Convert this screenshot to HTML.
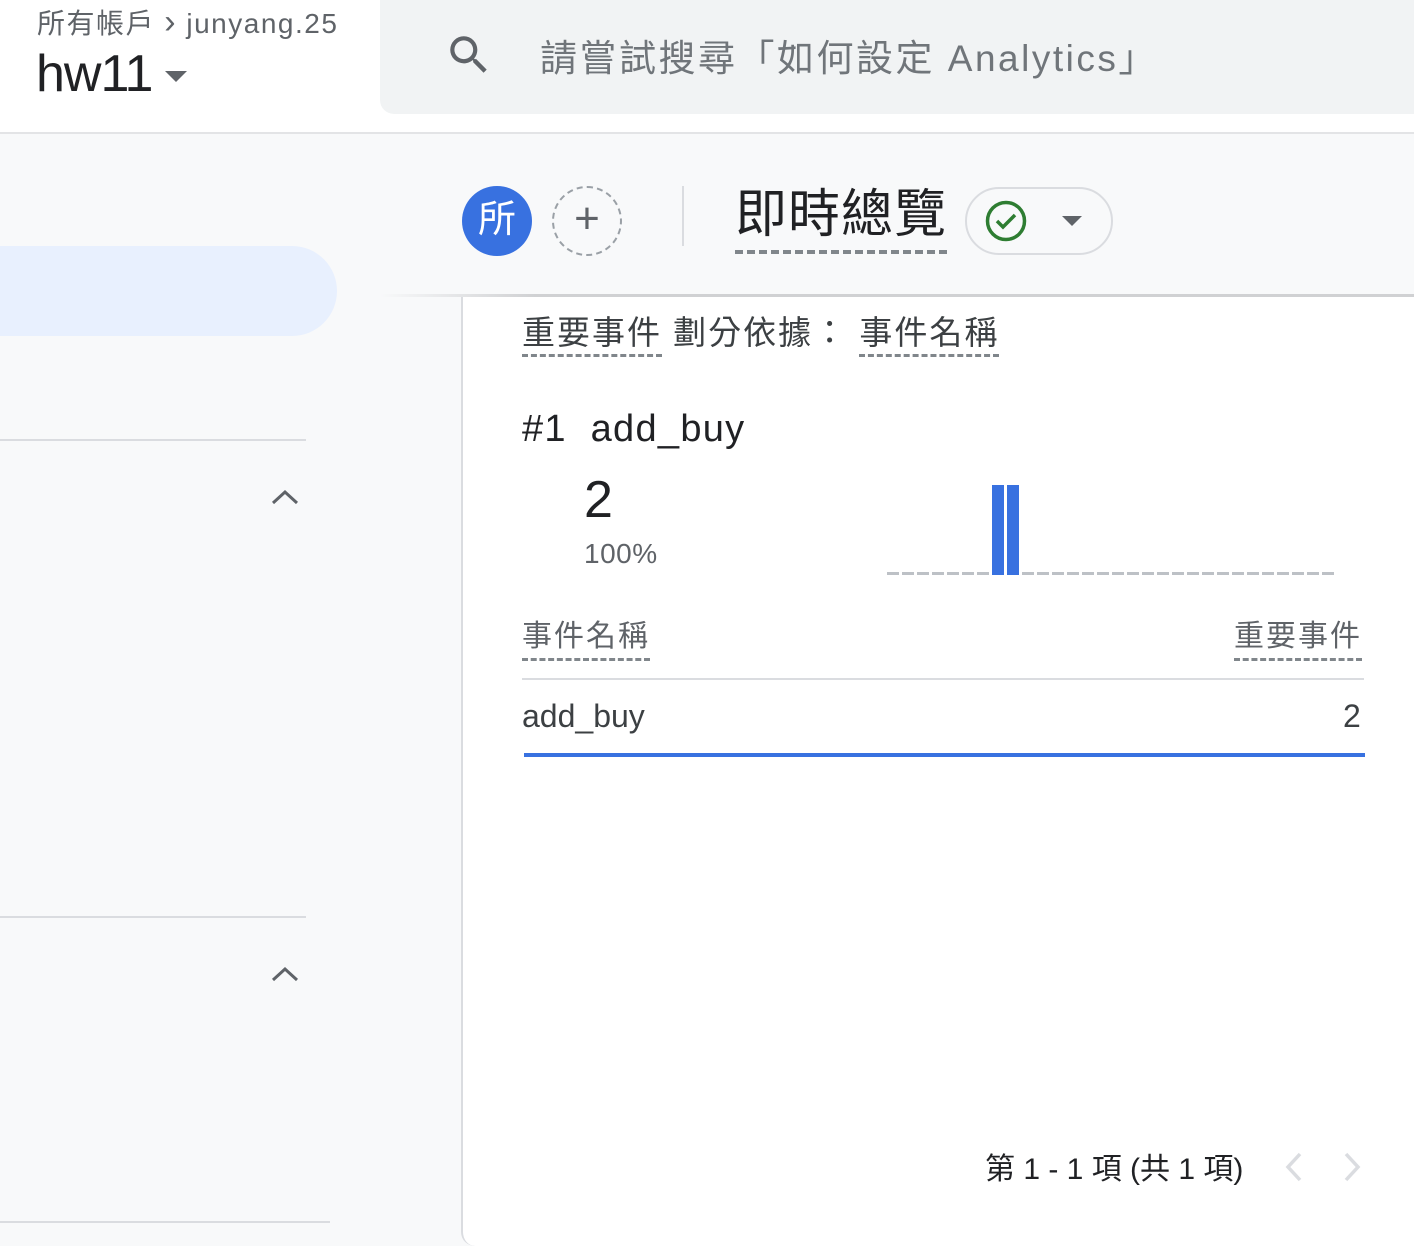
<!DOCTYPE html>
<html><head><meta charset="utf-8"><style>
*{margin:0;padding:0;box-sizing:border-box}
body{width:1414px;height:1246px;overflow:hidden;background:#f8f9fa;position:relative;font-family:"Liberation Sans","Noto Sans CJK TC",sans-serif;color:#202124}
.a{position:absolute;white-space:nowrap}
.dl{border-bottom:3px dashed #80868b;}
</style></head><body>
<div class="a" style="left:0;top:0;width:1414px;height:134px;background:#fff;border-bottom:2px solid #e3e4e6"></div>
<div class="a" style="left:37px;top:2px;font-size:28px;color:#5f6368;letter-spacing:1.5px">所有帳戶 <span style="font-size:34px;line-height:28px">&#x203A;</span> junyang.25</div>
<div class="a" style="left:36px;top:44px;font-size:52px;color:#202124;letter-spacing:-1px">hw11</div>
<svg class="a" style="left:163px;top:68px" width="26" height="16"><path d="M2 3h22l-11 11z" fill="#5f6368"/></svg>
<div class="a" style="left:380px;top:0;width:1040px;height:114px;background:#f1f3f4;border-radius:0 0 0 14px"></div>
<svg class="a" style="left:444px;top:30px" width="50" height="50" viewBox="0 0 24 24"><path d="M15.5 14h-.79l-.28-.27A6.47 6.47 0 0016 9.5 6.5 6.5 0 109.5 16c1.61 0 3.09-.59 4.23-1.57l.27.28v.79l5 4.99L20.49 19l-4.99-5zm-6 0C7.01 14 5 11.99 5 9.5S7.01 5 9.5 5 14 7.01 14 9.5 11.99 14 9.5 14z" fill="#5f6368"/></svg>
<div class="a" style="left:540px;top:28px;font-size:37px;color:#70757a;letter-spacing:2.5px">請嘗試搜尋「如何設定 Analytics」</div>

<div class="a" style="left:0;top:246px;width:337px;height:90px;background:#e8f0fe;border-radius:0 45px 45px 0"></div>
<div class="a" style="left:0;top:439px;width:306px;height:2px;background:#dadce0"></div>
<div class="a" style="left:0;top:916px;width:306px;height:2px;background:#dadce0"></div>
<div class="a" style="left:0;top:1221px;width:330px;height:2px;background:#dadce0"></div>
<svg class="a" style="left:270px;top:486px" width="30" height="20"><path d="M3 17l12-11 12 11" stroke="#5f6368" stroke-width="3" fill="none"/></svg>
<svg class="a" style="left:270px;top:963px" width="30" height="20"><path d="M3 17l12-11 12 11" stroke="#5f6368" stroke-width="3" fill="none"/></svg>

<div class="a" style="left:380px;top:294px;width:1034px;height:3px;background:linear-gradient(to right,rgba(0,0,0,0),#d0d1d3 15%)"></div>
<div class="a" style="left:461px;top:297px;width:960px;height:949px;background:#fff;border-left:2px solid #dadce0;border-radius:0 0 0 14px"></div>

<div class="a" style="left:462px;top:186px;width:70px;height:70px;border-radius:50%;background:#3871e0;color:#fff;font-size:38px;text-align:center;line-height:68px">所</div>
<div class="a" style="left:552px;top:186px;width:70px;height:70px;border-radius:50%;border:2px dashed #9aa0a6;color:#5f6368;font-size:44px;text-align:center;line-height:62px">+</div>
<div class="a" style="left:682px;top:186px;width:2px;height:60px;background:#dadce0"></div>
<div class="a dl" style="left:735px;top:180px;font-size:52px;line-height:70px;color:#202124;border-bottom-width:4px;letter-spacing:1px">即時總覽</div>
<div class="a" style="left:965px;top:187px;width:148px;height:68px;border:2px solid #dadce0;border-radius:34px"></div>
<svg class="a" style="left:984px;top:199px" width="44" height="44" viewBox="0 0 44 44"><circle cx="22" cy="22" r="18.5" stroke="#2e7d32" stroke-width="3.5" fill="none"/><path d="M13 22l6 6 12-12" stroke="#2e7d32" stroke-width="3.5" fill="none"/></svg>
<svg class="a" style="left:1060px;top:214px" width="24" height="14"><path d="M2 2h20l-10 10z" fill="#5f6368"/></svg>

<div class="a" style="left:522px;top:306px;font-size:33px;color:#3c4043;letter-spacing:2px"><span class="dl" style="display:inline-block;line-height:42px">重要事件</span> 劃分依據： <span class="dl" style="display:inline-block;line-height:42px">事件名稱</span></div>
<div class="a" style="left:522px;top:408px;font-size:38px;color:#202124;letter-spacing:1.3px">#1&nbsp; add_buy</div>
<div class="a" style="left:584px;top:470px;font-size:52px;color:#202124">2</div>
<div class="a" style="left:584px;top:538px;font-size:28px;color:#5f6368;letter-spacing:0.5px">100%</div>
<div class="a" style="left:887px;top:572px;width:448px;height:3px;background:repeating-linear-gradient(to right,#bdc1c6 0 12px,transparent 12px 15px)"></div>
<div class="a" style="left:992px;top:485px;width:12px;height:90px;background:#3871e0"></div>
<div class="a" style="left:1007px;top:485px;width:12px;height:90px;background:#3871e0"></div>

<div class="a dl" style="left:522px;top:616px;font-size:30px;line-height:42px;color:#5f6368;letter-spacing:2px">事件名稱</div>
<div class="a dl" style="left:1234px;top:616px;font-size:30px;line-height:42px;color:#5f6368;letter-spacing:2px">重要事件</div>
<div class="a" style="left:522px;top:678px;width:842px;height:2px;background:#dadce0"></div>
<div class="a" style="left:522px;top:698px;font-size:32px;color:#3c4043">add_buy</div>
<div class="a" style="left:1343px;top:698px;font-size:32px;color:#3c4043">2</div>
<div class="a" style="left:524px;top:753px;width:841px;height:4px;background:#3871e0"></div>

<div class="a" style="left:985px;top:1144px;font-size:30px;color:#202124">第 1 - 1 項 (共 1 項)</div>
<svg class="a" style="left:1280px;top:1150px" width="90" height="34"><path d="M20 4L8 17l12 13" stroke="#dadce0" stroke-width="3.5" fill="none"/><path d="M66 4l12 13-12 13" stroke="#dadce0" stroke-width="3.5" fill="none"/></svg>
</body></html>
